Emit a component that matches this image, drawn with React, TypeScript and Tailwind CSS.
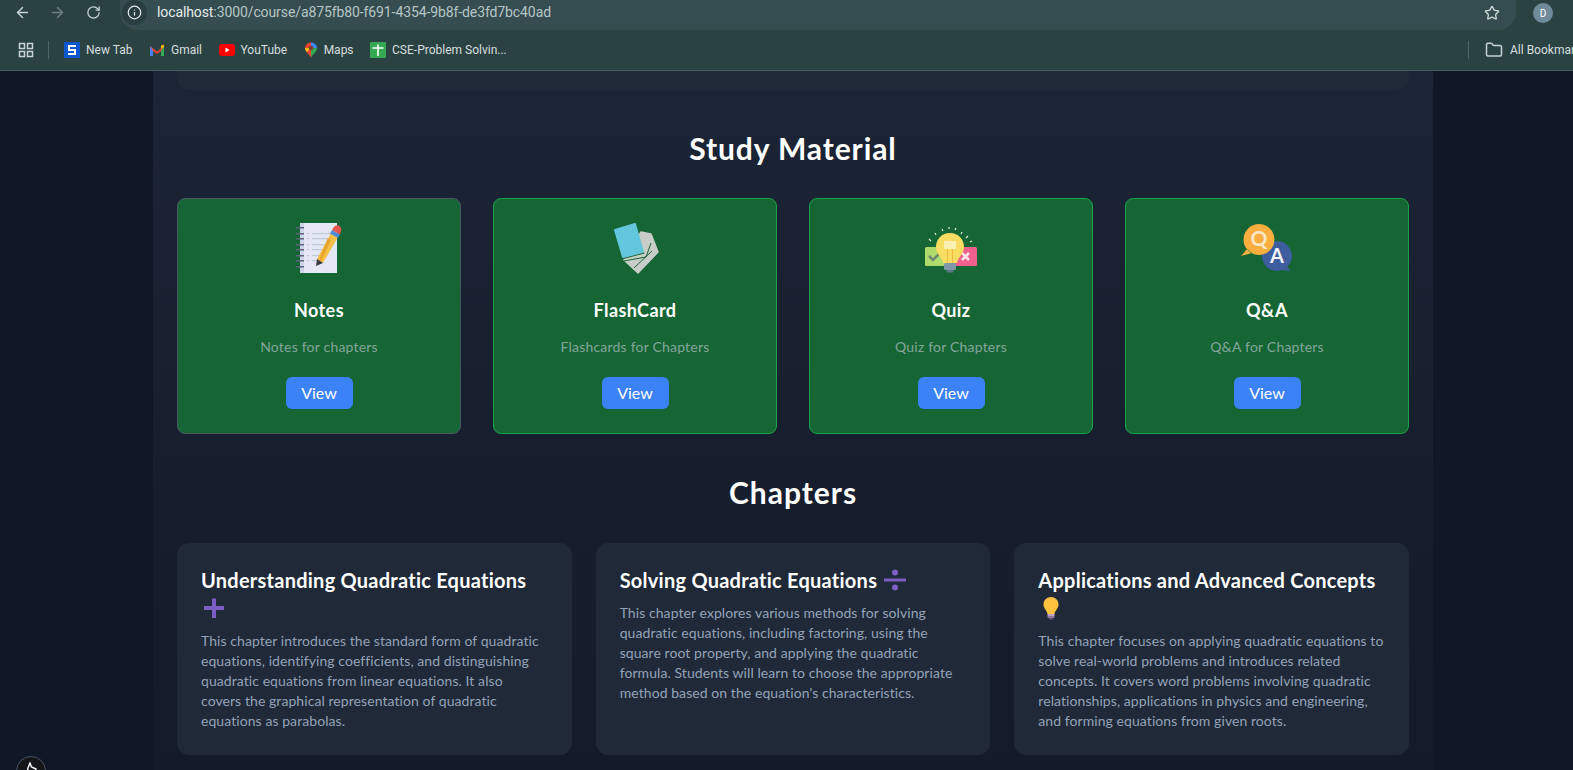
import React from 'react';
import { ArrowLeft, ArrowRight, RotateCw, Info, Star, Folder } from 'lucide-react';

const NotesIcon = () => (
  <svg viewBox="0 0 50 52" className="h-[52px] w-[50px]">
    <rect x="6" y="1" width="37" height="50" fill="#e4e8f5" />
    <rect x="6" y="1" width="4" height="50" fill="#cfd5e8" />
    {[5, 11, 16, 22, 27, 33, 38, 44].map((y) => (
      <rect key={y} x="2" y={y} width="8" height="1.5" fill="#5f6478" />
    ))}
    {[11, 16, 22, 27, 33, 38].map((y) => (
      <g key={y}>
        <rect x="13" y={y} width="2" height="1.2" fill="#c2c8da" />
        <rect x="18" y={y} width={y > 30 ? 12 : 18} height="1.2" fill="#c2c8da" />
      </g>
    ))}
    <path d="M37 11 L44 15 L29 41 L23 37 Z" fill="#f5c045" />
    <path d="M34 16 L37 18 L27 40 L25 38 Z" fill="#e5a52f" />
    <path d="M23 37 L29 41 L22 44 Z" fill="#3b3b44" />
    <path d="M38 8 L46 12.5 L44 16 L36 11.5 Z" fill="#4b8edb" />
    <path d="M39.5 5.5 Q42 2 45.5 4 Q48.5 6.5 46.5 10.5 L46 12.5 L38 8 Z" fill="#e5574f" />
  </svg>
);

const FlashcardIcon = () => (
  <svg viewBox="0 0 50 52" className="h-[52px] w-[50px]">
    <path d="M31 10 L41 12 L48 30 L28 51 L14 38 Z" fill="#c9cdc9" stroke="#c9cdc9" strokeWidth="1.5" strokeLinejoin="round" />
    <path d="M14 39 L36 35 L41 21 M24 46 L42 29" fill="none" stroke="#166534" strokeWidth="1" />
    <path d="M5 8 L25 2 L33 30 L13 35 Z" fill="#63c6dc" stroke="#63c6dc" strokeWidth="2" strokeLinejoin="round" />
    <path d="M13.5 36.5 L34.5 31" fill="none" stroke="#166534" strokeWidth="1" />
  </svg>
);

const QuizIcon = () => (
  <svg viewBox="0 0 54 52" className="h-[52px] w-[54px]">
    {[[5, 17, 7, 19], [11, 11, 12, 13], [18, 7, 19, 9], [25, 5, 25, 7], [32, 6, 31, 8], [38, 10, 37, 12], [44, 14, 42, 16], [48, 19, 46, 20]].map(([a, b, c, d]) => (
      <line key={a} x1={a} y1={b} x2={c} y2={d} stroke="#f3f4d8" strokeWidth="1.1" />
    ))}
    <rect x="1" y="25" width="23" height="19" rx="1.5" fill="#addc6c" />
    <rect x="30" y="25" width="23" height="19" rx="1.5" fill="#f0608f" />
    <path d="M5 34 L9 38 L16 31" fill="none" stroke="#6f8a6c" strokeWidth="2.6" />
    <path d="M38 31 L45 38 M45 31 L38 38" fill="none" stroke="#fbe3ea" strokeWidth="2.6" />
    <path d="M26 11 C17 11 12 18 12 25 C12 32 18 35 19 41 L33 41 C34 35 40 32 40 25 C40 18 35 11 26 11 Z" fill="#f7de63" />
    <rect x="20" y="19" width="12" height="8" fill="#fbf0b4" />
    <path d="M23.5 27 L23.5 41 M28.5 27 L28.5 41" stroke="#f2b93e" strokeWidth="1" />
    <rect x="20" y="41" width="12" height="7" rx="1.5" fill="#7d99a8" />
    <rect x="22.5" y="48" width="7" height="2.5" rx="1" fill="#5e7785" />
  </svg>
);

const QaIcon = () => (
  <svg viewBox="0 0 52 52" className="h-[52px] w-[52px]">
    <path d="M36 19 A15 15 0 1 1 35.9 19 M45 44 L50 49 L40 48 Z" fill="#3d5d9e" />
    <path d="M18 2 A15.5 15.5 0 1 1 17.9 2 M6 27 L0 34 L11 31 Z" fill="#f9ae3f" />
    <text x="18" y="24" textAnchor="middle" fontSize="21" fontWeight="700" fontFamily="Lato, sans-serif" fill="#f9e6c5">Q</text>
    <text x="36" y="41" textAnchor="middle" fontSize="20" fontWeight="700" fontFamily="Lato, sans-serif" fill="#f2f4fa">A</text>
  </svg>
);

const PlusEmoji = () => (
  <svg viewBox="0 0 26 26" className="-my-1 inline-block h-[26px] w-[26px] align-[-1px]">
    <path d="M11 3.5 H15 V11 H23 V15 H15 V23 H11 V15 H3 V11 H11 Z" fill="#7b5fc4" />
  </svg>
);

const DivideEmoji = () => (
  <svg viewBox="0 0 26 26" className="-my-1 inline-block h-[26px] w-[26px] align-[-1px]">
    <rect x="2" y="11.5" width="22" height="3" fill="#7b5fc4" />
    <circle cx="13" cy="5.5" r="3" fill="#7b5fc4" />
    <circle cx="13" cy="20.5" r="3" fill="#7b5fc4" />
  </svg>
);

const BulbEmoji = () => (
  <svg viewBox="0 0 26 26" className="-my-1 inline-block h-[26px] w-[26px] align-[-1px]">
    <path d="M13 2 C8 2 5.5 6 5.5 9.5 C5.5 13.5 9 15.5 9.5 19 L16.5 19 C17 15.5 20.5 13.5 20.5 9.5 C20.5 6 18 2 13 2 Z" fill="#fbc13f" />
    <rect x="9.5" y="19" width="7" height="2" fill="#b9a3c9" />
    <rect x="9.5" y="21" width="7" height="2" fill="#8a7398" />
    <rect x="11" y="23" width="4" height="1.5" fill="#6a5578" />
  </svg>
);

const materials = [
  { title: 'Notes', desc: 'Notes for chapters', icon: <NotesIcon />, border: 'border-[#4b5563]' },
  { title: 'FlashCard', desc: 'Flashcards for Chapters', icon: <FlashcardIcon />, border: 'border-[#16a34a]' },
  { title: 'Quiz', desc: 'Quiz for Chapters', icon: <QuizIcon />, border: 'border-[#16a34a]' },
  { title: 'Q&A', desc: 'Q&A for Chapters', icon: <QaIcon />, border: 'border-[#16a34a]' },
];

const chapters = [
  {
    title: 'Understanding Quadratic Equations',
    emoji: <PlusEmoji />,
    descClass: 'pr-2',
    desc: 'This chapter introduces the standard form of quadratic equations, identifying coefficients, and distinguishing quadratic equations from linear equations. It also covers the graphical representation of quadratic equations as parabolas.',
  },
  {
    title: 'Solving Quadratic Equations',
    emoji: <DivideEmoji />,
    descClass: '',
    desc: "This chapter explores various methods for solving quadratic equations, including factoring, using the square root property, and applying the quadratic formula. Students will learn to choose the appropriate method based on the equation's characteristics.",
  },
  {
    title: 'Applications and Advanced Concepts',
    emoji: <BulbEmoji />,
    descClass: '',
    desc: 'This chapter focuses on applying quadratic equations to solve real-world problems and introduces related concepts. It covers word problems involving quadratic relationships, applications in physics and engineering, and forming equations from given roots.',
  },
];

const Bookmark = ({ icon, label }: { icon: React.ReactNode; label: string }) => (
  <div className="flex items-center gap-[6px]">
    {icon}
    <span className="text-[12px] text-[#d7dfdf]">{label}</span>
  </div>
);

const BrowserBar = () => (
  <div className="h-[71px] shrink-0 border-b border-[#4c5c5c] bg-[#2b4243] font-['Roboto',sans-serif]">
    <div className="flex h-[32px] items-start">
      <div className="flex w-[120px] items-center pt-[4px] pl-[14px] text-[#c9d3d3]">
        <ArrowLeft size={17} />
        <ArrowRight size={17} className="ml-[18px] text-[#6f8080]" />
        <RotateCw size={15} className="ml-[20px]" />
      </div>
      <div className="flex h-[30px] w-[1396px] items-center rounded-b-[18px] bg-[#354c50] pr-[16px] pb-[5px]">
        <div className="ml-[2px] flex h-[25px] w-[25px] items-center justify-center rounded-full bg-[#2a3e41]">
          <Info size={15} className="text-[#e3e9e9]" />
        </div>
        <span className="ml-[10px] text-[14px] tracking-[-0.1px] text-[#e6ecec]">
          localhost<span className="text-[#b9c6c6]">:3000/course/a875fb80-f691-4354-9b8f-de3fd7bc40ad</span>
        </span>
        <Star size={16} className="ml-auto text-[#d0d9d9]" />
      </div>
      <div className="ml-[17px] mt-[3px] flex h-[20px] w-[20px] items-center justify-center rounded-full bg-[#6f8a98] text-[10px] text-white">D</div>
    </div>
    <div className="flex h-[36px] items-center overflow-hidden">
      <svg viewBox="0 0 16 16" className="ml-[18px] h-[16px] w-[16px] shrink-0" fill="none" stroke="#c9d3d3" strokeWidth="1.5">
        <rect x="1.5" y="1.5" width="5" height="5" />
        <rect x="9.5" y="1.5" width="5" height="5" />
        <rect x="1.5" y="9.5" width="5" height="5" />
        <rect x="9.5" y="9.5" width="5" height="5" />
      </svg>
      <div className="ml-[14px] h-[18px] w-px shrink-0 bg-[#4f6464]" />
      <div className="ml-[15px] flex items-center gap-[16.5px]">
        <Bookmark
          label="New Tab"
          icon={
            <svg viewBox="0 0 16 16" className="h-[16px] w-[16px]">
              <rect width="16" height="16" fill="#0b57d0" />
              <path d="M12 4 H5 V8 H11 V12 H4" fill="none" stroke="#fff" strokeWidth="2" />
            </svg>
          }
        />
        <Bookmark
          label="Gmail"
          icon={
            <svg viewBox="0 0 16 16" className="h-[16px] w-[16px]">
              <path d="M1 4 V14 H4 V7 Z" fill="#4285f4" />
              <path d="M15 4 V14 H12 V7 Z" fill="#34a853" />
              <path d="M1 4 L8 9.5 L8 12 L4 9 Z" fill="#ea4335" />
              <path d="M15 4 L8 9.5 L8 12 L12 9 Z" fill="#ea4335" />
              <path d="M12 3.5 L15 2.8 V5 L12 7 Z" fill="#fbbc04" />
            </svg>
          }
        />
        <Bookmark
          label="YouTube"
          icon={
            <svg viewBox="0 0 16 16" className="h-[16px] w-[16px]">
              <rect y="2" width="16" height="12" rx="3" fill="#ff0000" />
              <path d="M6.5 5.5 L10.5 8 L6.5 10.5 Z" fill="#fff" />
            </svg>
          }
        />
        <Bookmark
          label="Maps"
          icon={
            <svg viewBox="1 0 14 16" className="h-[16px] w-[14px]">
              <path d="M8 0.5 C4.5 0.5 2 3 2 6 C2 10 6 12 8 15.5 Z" fill="#ea4335" />
              <path d="M8 0.5 C11.5 0.5 14 3 14 6 L8 6 Z" fill="#4285f4" />
              <path d="M14 6 C14 10 10 12 8 15.5 L8 6 Z" fill="#34a853" />
              <path d="M2 6 L8 6 L4 10 C3 9 2 7.5 2 6 Z" fill="#fbbc04" />
              <circle cx="8" cy="6" r="2.3" fill="#7b3f2f" />
            </svg>
          }
        />
        <Bookmark
          label="CSE-Problem Solvin..."
          icon={
            <svg viewBox="0 0 16 16" className="h-[16px] w-[16px]">
              <rect width="16" height="16" rx="1" fill="#34a853" />
              <path d="M2.5 6 H13.5 M8 2.5 V14" stroke="#fff" strokeWidth="1.6" />
            </svg>
          }
        />
      </div>
      <div className="ml-auto flex w-[105px] shrink-0 items-center overflow-hidden whitespace-nowrap">
        <div className="h-[18px] w-px shrink-0 bg-[#4f6464]" />
        <Folder size={18} className="ml-[16px] shrink-0 text-[#c9d3d3]" />
        <span className="ml-[7px] text-[12px] text-[#d7dfdf]">All Bookmarks</span>
      </div>
    </div>
  </div>
);

export default function App() {
  return (
    <div className="relative flex h-[770px] flex-col overflow-hidden bg-[#101726] font-['Lato',sans-serif]">
      <BrowserBar />

      <div className="ml-[153px] min-h-0 w-[1280px] flex-1 overflow-hidden bg-linear-to-b from-[#1c2535] to-[#131a2a] px-6">
        <div className="h-[19px] rounded-b-xl bg-[#1f2937]" />

        {/* Study material */}
        <h2 className="mt-10 text-center text-3xl font-bold tracking-[0.9px] text-white">Study Material</h2>
        <div className="mt-8 grid grid-cols-4 gap-8">
          {materials.map((m) => (
            <div key={m.title} className={`flex h-[236px] flex-col items-center rounded-lg border bg-[#166534] pt-[23px] ${m.border}`}>
              <div className="flex h-[52px] items-center justify-center">{m.icon}</div>
              <h3 className="mt-[22px] text-lg font-bold tracking-[0.4px] text-white">{m.title}</h3>
              <p className="mt-[13px] text-sm tracking-[0.2px] text-[#83a59b]">{m.desc}</p>
              <button className="mt-5 h-8 w-[67px] rounded-md bg-[#3b82f6] text-base text-white">View</button>
            </div>
          ))}
        </div>

        {/* Chapters */}
        <h2 className="mt-10 text-center text-3xl font-bold tracking-[1px] text-white">Chapters</h2>
        <div className="mt-[33px] grid grid-cols-3 gap-6">
          {chapters.map((c) => (
            <div key={c.title} className="h-[212px] rounded-xl bg-[#1f2937] p-6">
              <h3 className="-mt-px mb-[9px] text-xl font-bold tracking-[0.25px] text-white">
                {c.title} {c.emoji}
              </h3>
              <p className={`text-sm tracking-[0.07px] text-[#94a3b8] ${c.descClass}`}>{c.desc}</p>
            </div>
          ))}
        </div>
      </div>

      {/* dev indicator */}
      <div className="absolute bottom-[-16px] left-[16px] flex h-[30px] w-[30px] items-start justify-center rounded-full border border-gray-600 bg-[#14161a] pt-[5px]">
        <svg viewBox="0 0 12 12" className="h-[12px] w-[12px]">
          <path d="M5 1 L6.5 5 L11 7 L10 12 L2 12 L3 6 Z" fill="none" stroke="#fff" strokeWidth="1.4" />
        </svg>
      </div>
    </div>
  );
}
